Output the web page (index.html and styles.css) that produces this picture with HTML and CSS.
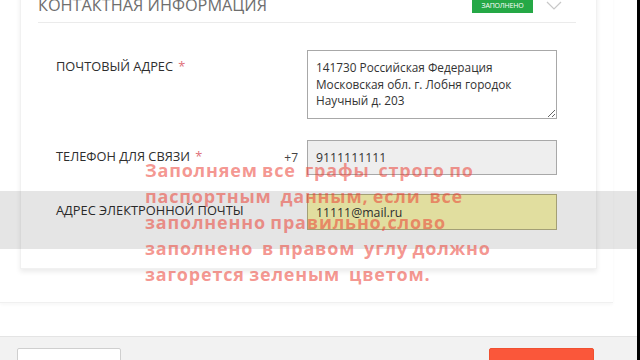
FILE: index.html
```html
<!DOCTYPE html>
<html lang="ru">
<head>
  <meta charset="UTF-8">
  <meta name="viewport" content="width=device-width, initial-scale=1.0">
  <title>Контактная информация</title>
  <link rel="stylesheet" href="styles.css">
</head>
<body>
  <div class="screen">
    <div class="modal">
      <div class="modal-body">
        <div class="section">
          <div class="card">
            <div class="card-head">
              <h3>КОНТАКТНАЯ ИНФОРМАЦИЯ</h3>
              <span class="badge">ЗАПОЛНЕНО</span>
              <svg class="chevron" width="16" height="9" viewBox="0 0 16 9">
                <path d="M1 1 L8 8 L15 1" fill="none" stroke="#c8c8c8" stroke-width="1.2"/>
              </svg>
            </div>
            <div class="card-body">
              <div class="row row-address">
                <label for="address">ПОЧТОВЫЙ АДРЕС <span class="req">*</span></label>
                <span class="prefix"></span>
                <textarea id="address" readonly>141730 Российская Федерация Московская обл. г. Лобня городок Научный д. 203</textarea>
              </div>
              <div class="row row-phone">
                <label for="phone">ТЕЛЕФОН ДЛЯ СВЯЗИ <span class="req">*</span></label>
                <span class="prefix">+7</span>
                <input id="phone" class="input input-disabled" type="text" value="9111111111" readonly>
              </div>
              <div class="row row-email">
                <label for="email">АДРЕС ЭЛЕКТРОННОЙ ПОЧТЫ</label>
                <span class="prefix"></span>
                <input id="email" class="input input-autofill" type="text" value="11111@mail.ru" readonly>
              </div>
            </div>
          </div>
        </div>
      </div>
      <div class="modal-foot">
        <button class="btn btn-default"></button>
        <button class="btn btn-primary"></button>
      </div>
    </div>

    <!-- subtitle from the video -->
    <div class="subtitle-band"></div>
    <div class="subtitle">Заполняем все  графы  строго по
паспортным  данным, если  все
заполненно правильно,слово
заполнено  в правом  углу должно
загорется зеленым  цветом.</div>
  </div>
</body>
</html>
```

FILE: styles.css
```css
body {
  margin: 0;
  padding: 0;
  background-color: #000;
  font-family: "Open Sans", "Liberation Sans", sans-serif;
}

.screen {
  position: relative;
  width: 637px;
  height: 360px;
  overflow: hidden;
  background-color: #fbfbfb;
}

.modal {
  display: flex;
  flex-direction: column;
  height: 100%;
}

.modal-body {
  background-color: #fff;
  padding-bottom: 33px;
}

.section {
  width: 613px;
  background-color: #fff;
  padding-bottom: 33px;
  border-bottom: 1px solid #f0f0f0;
  box-shadow: 0 2px 3px rgba(0, 0, 0, 0.03);
}

.card {
  margin: -18px 0 0 20px;
  width: 575px;
  background-color: #fff;
  border: 1px solid #f1f1f1;
  border-top: none;
  box-shadow: 0 3px 5px rgba(0, 0, 0, 0.08);
}

.card-head {
  display: flex;
  align-items: flex-start;
  height: 41px;
  box-sizing: border-box;
  margin: 0 20px 0 17px;
  padding-top: 13px;
  border-bottom: 1px solid #ebebeb;
}

.card-head h3 {
  flex: 1;
  margin: 0;
  font-size: 16.3px;
  font-weight: 400;
  line-height: 20px;
  color: #6e6e6e;
}

.badge {
  margin-top: 3px;
  width: 61px;
  height: 15px;
  background-color: #25a846;
  color: #fff;
  font-size: 7px;
  line-height: 16px;
  text-align: center;
  letter-spacing: -0.2px;
}

.chevron {
  margin: 6px 14px 0 13px;
}

.card-body {
  padding: 27px 0 38px 35px;
  display: flex;
  flex-direction: column;
  gap: 21px;
}

.row {
  display: grid;
  grid-template-columns: 220px 31px 250px;
  align-items: start;
}

.row-phone + .row-email {
  margin-top: -2px;
}

.row label {
  padding-top: 8px;
  font-size: 12.8px;
  line-height: 17px;
  color: #2e2e2e;
}

.req {
  color: #e0707a;
  margin-left: 2px;
}

.prefix {
  padding: 10px 9px 0 0;
  text-align: right;
  font-size: 12px;
  line-height: 16px;
  color: #444;
}

textarea {
  box-sizing: border-box;
  width: 250px;
  height: 69px;
  margin: 0;
  padding: 8px 8px;
  border: 1px solid #a8a8a8;
  border-radius: 0;
  font-family: "Open Sans", "Liberation Sans", sans-serif;
  font-size: 11.8px;
  line-height: 16.5px;
  color: #333;
  background-color: #fff;
  overflow: hidden;
}

.input {
  box-sizing: border-box;
  width: 250px;
  height: 35px;
  margin: 0;
  padding: 0 8px;
  border: 1px solid #a8a8a8;
  border-radius: 0;
  font-family: "Open Sans", "Liberation Sans", sans-serif;
  font-size: 12.3px;
  color: #333;
  outline: none;
}

.input-disabled {
  background-color: #eeeeee;
}

.input-autofill {
  height: 36px;
  background-color: #fbf8b2;
  border-color: #b6b184;
}

.modal-foot {
  flex: 1;
  display: flex;
  justify-content: space-between;
  align-items: flex-start;
  padding: 11px 43px 0 17px;
  background-color: #f2f2f2;
  border-top: 1px solid #e4e4e4;
}

.btn {
  width: 104px;
  height: 30px;
  border-radius: 2px;
  padding: 0;
  font-family: inherit;
}

.btn-default {
  background-color: #fff;
  border: 1px solid #cfcfcf;
}

.btn-primary {
  width: 105px;
  background-color: #fa573a;
  border: 1px solid #f05030;
}

.subtitle-band {
  position: absolute;
  left: 0;
  right: 0;
  top: 191px;
  height: 58px;
  background-color: rgba(0, 0, 0, 0.1);
}

.subtitle {
  position: absolute;
  left: 145px;
  top: 157px;
  white-space: pre;
  font-size: 18px;
  font-weight: 700;
  line-height: 26px;
  letter-spacing: 0.8px;
  word-spacing: -1px;
  color: rgba(236, 62, 50, 0.55);
}
```
